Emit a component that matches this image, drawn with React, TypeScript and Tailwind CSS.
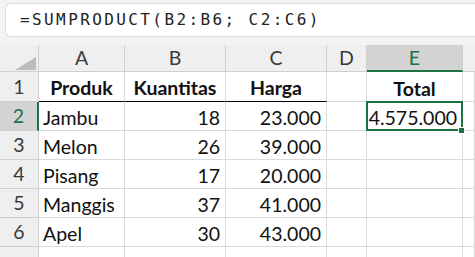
import React from 'react';

const cols = ['A', 'B', 'C', 'D', 'E'];

const data: [string, number, string][] = [
  ['Jambu', 18, '23.000'],
  ['Melon', 26, '39.000'],
  ['Pisang', 17, '20.000'],
  ['Manggis', 37, '41.000'],
  ['Apel', 30, '43.000'],
];

const grid = 'border-r border-b border-[#dadada]';
const head = 'bg-[#efefef] border-r border-b border-[#cfcfcf] flex items-center justify-center text-[#3a3a3a]';

function RowHead({ n, active }: { n?: number; active?: boolean }) {
  return (
    <div
      className={
        active
          ? 'bg-[#d3d3d3] border-b border-[#cfcfcf] border-r-2 border-r-[#1e7145] text-[#1e7145] flex items-center justify-center'
          : 'bg-[#efefef] border-r border-b border-[#cfcfcf] text-[#3a3a3a] flex items-center justify-center'
      }
    >
      {n}
    </div>
  );
}

export default function App() {
  return (
    <div className="w-[475px] h-[257px] overflow-hidden bg-[#f3f3f3] font-['Lato',sans-serif] text-[19.5px] leading-none text-[#111]">
      {/* formula bar */}
      <div className="h-[45px] pt-[3px] pl-[5px]">
        <div className="h-[34px] rounded-l-[6px] border border-r-0 border-[#dcdcdc] bg-white flex items-center pl-[14px] font-['DejaVu_Sans_Mono',monospace] text-[16px] tracking-[2.4px] text-[#222]">
          =SUMPRODUCT(B2:B6; C2:C6)
        </div>
      </div>

      {/* sheet */}
      <div className="grid grid-cols-[39px_86px_101px_101px_40px_96px_1fr] grid-rows-[27px_30px_29px_29px_29px_29px_29px_29px] bg-white">
        {/* corner */}
        <div className="bg-[#efefef] border-r border-b border-[#cfcfcf] relative">
          <svg className="absolute left-[15px] top-[12px]" width="21" height="13" viewBox="0 0 21 13">
            <polygon points="0,13 21,13 21,0" fill="#bcbcbc" />
          </svg>
        </div>
        {cols.map((c) =>
          c === 'E' ? (
            <div key={c} className="bg-[#d3d3d3] border-r border-[#cfcfcf] border-b-2 border-b-[#1e7145] text-[#1e7145] flex items-center justify-center">
              {c}
            </div>
          ) : (
            <div key={c} className={head}>{c}</div>
          )
        )}
        <div className="bg-[#efefef] border-b border-[#cfcfcf]" />

        {/* row 1: headings */}
        <RowHead n={1} />
        <div className="border-r border-[#dadada] border-b border-b-black font-bold flex items-center justify-center pt-[3px]">Produk</div>
        <div className="border-r border-[#dadada] border-b border-b-black font-bold flex items-center justify-center pt-[3px]">Kuantitas</div>
        <div className="border-r border-[#dadada] border-b border-b-black font-bold flex items-center justify-center pt-[3px]">Harga</div>
        <div className={grid} />
        <div className="border-r border-[#dadada] font-bold flex items-center justify-center pt-[3px]">Total</div>
        <div className={grid} />

        {data.map(([name, qty, price], i) => (
          <React.Fragment key={name}>
            <RowHead n={i + 2} active={i === 0} />
            <div className={`${grid} flex items-center pl-[4px] pt-[3px]`}>{name}</div>
            <div className={`${grid} flex items-center justify-end pr-[5px] pt-[3px]`}>{qty}</div>
            <div className={`${grid} flex items-center justify-end pr-[5px] pt-[3px]`}>{price}</div>
            <div className={grid} />
            {i === 0 ? (
              <div className="border-r border-b border-[#dadada] relative flex items-center justify-end pr-[5px] pt-[3px]">
                4.575.000
                <div className="absolute -left-px -top-px -right-px -bottom-px border-2 border-[#1e7145]" />
                <div className="absolute -right-[3px] -bottom-[4px] w-[7px] h-[7px] bg-[#1e7145] border border-white" />
              </div>
            ) : (
              <div className={grid} />
            )}
            <div className={grid} />
          </React.Fragment>
        ))}

        {/* row 7, only its top edge shows */}
        <RowHead />
        {[0, 1, 2, 3, 4, 5].map((k) => (
          <div key={k} className={grid} />
        ))}
      </div>
    </div>
  );
}
